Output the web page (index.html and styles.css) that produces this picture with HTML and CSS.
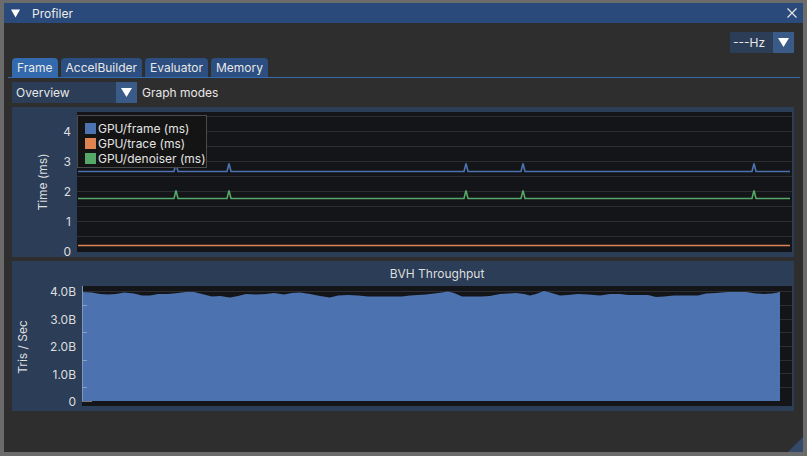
FILE: index.html
```html
<!DOCTYPE html>
<html>
<head>
<meta charset="utf-8">
<link rel="stylesheet" href="styles.css">
</head>
<body>
<div class="window">
  <div class="titlebar">
    <svg class="collapse" width="9" height="9" viewBox="0 0 9 9"><polygon points="0,0.5 9,0.5 4.5,8.5" fill="#ffffff"/></svg>
    <span class="title">Profiler</span>
    <svg class="close" width="10" height="10" viewBox="0 0 10 10"><path d="M0.5 0.5 L9.5 9.5 M9.5 0.5 L0.5 9.5" stroke="#e6e6e6" stroke-width="1.2" fill="none"/></svg>
  </div>
  <div class="content">
    <div class="toprow">
      <div class="combo hz">
        <span class="combo-text">---Hz</span>
        <span class="combo-btn"><svg width="11" height="9" viewBox="0 0 11 9"><polygon points="0,0 11,0 5.5,9" fill="#ffffff"/></svg></span>
      </div>
    </div>
    <div class="tabbar">
      <div class="tab active">Frame</div>
      <div class="tab">AccelBuilder</div>
      <div class="tab">Evaluator</div>
      <div class="tab">Memory</div>
    </div>
    <div class="moderow">
      <div class="combo overview">
        <span class="combo-text">Overview</span>
        <span class="combo-btn"><svg width="11" height="9" viewBox="0 0 11 9"><polygon points="0,0 11,0 5.5,9" fill="#ffffff"/></svg></span>
      </div>
      <span class="label">Graph modes</span>
    </div>
    <div class="plot">
      <svg class="chart" width="782" height="150" viewBox="0 0 782 150">
        <rect x="65" y="5" width="715" height="140" fill="#141518"/>
        <g stroke="#2c2e32" stroke-width="1">
          <line x1="65" x2="780" y1="9.5" y2="9.5"/>
          <line x1="65" x2="780" y1="24.5" y2="24.5"/>
          <line x1="65" x2="780" y1="39.5" y2="39.5"/>
          <line x1="65" x2="780" y1="54.5" y2="54.5"/>
          <line x1="65" x2="780" y1="69.5" y2="69.5"/>
          <line x1="65" x2="780" y1="84.5" y2="84.5"/>
          <line x1="65" x2="780" y1="99.5" y2="99.5"/>
          <line x1="65" x2="780" y1="114.5" y2="114.5"/>
          <line x1="65" x2="780" y1="129.5" y2="129.5"/>
        </g>
        <g class="tick" text-anchor="end">
          <text x="59" y="24.5">4</text>
          <text x="59" y="54.5">3</text>
          <text x="59" y="84.5">2</text>
          <text x="59" y="114.5">1</text>
          <text x="59" y="144">0</text>
        </g>
        <text class="tick" text-anchor="middle" transform="translate(30 75) rotate(-90)">Time (ms)</text>
        <path d="M66 138.5 H778" stroke="#dd8452" stroke-width="1.6" fill="none"/>
        <path d="M66 91.5 H162 L164 83.5 L166 91.5 H215 L217 83.5 L219 91.5 H452 L454 83.5 L456 91.5 H509 L511 83.5 L513 91.5 H740 L742 83.5 L744 91.5 H778" stroke="#55a868" stroke-width="1.6" fill="none"/>
        <path d="M66 64.5 H162 L164 56.5 L166 64.5 H215 L217 56.5 L219 64.5 H452 L454 56.5 L456 64.5 H509 L511 56.5 L513 64.5 H740 L742 56.5 L744 64.5 H778" stroke="#4c72b0" stroke-width="1.6" fill="none"/>
      </svg>
      <div class="legend">
        <div class="entry"><span class="swatch blue"></span>GPU/frame (ms)</div>
        <div class="entry"><span class="swatch orange"></span>GPU/trace (ms)</div>
        <div class="entry"><span class="swatch green"></span>GPU/denoiser (ms)</div>
      </div>
    </div>
    <div class="plot">
      <svg class="chart" width="782" height="150" viewBox="0 0 782 150">
        <text class="tick" x="425" y="12" text-anchor="middle">BVH Throughput</text>
        <rect x="70" y="25" width="710" height="120" fill="#141518"/>
        <g stroke="#2c2e32" stroke-width="1">
          <line x1="70" x2="780" y1="30.5" y2="30.5"/>
          <line x1="70" x2="780" y1="44.5" y2="44.5"/>
          <line x1="70" x2="780" y1="58.5" y2="58.5"/>
          <line x1="70" x2="780" y1="71.5" y2="71.5"/>
          <line x1="70" x2="780" y1="85.5" y2="85.5"/>
          <line x1="70" x2="780" y1="99.5" y2="99.5"/>
          <line x1="70" x2="780" y1="112.5" y2="112.5"/>
          <line x1="70" x2="780" y1="126.5" y2="126.5"/>
        </g>
        <polygon fill="#4c72b0" points="70,140 70,31 80,31.5 88,33 96,33.5 104,33 112,31.5 122,32.5 130,34.5 138,34.5 146,33 156,33 166,32 174,31 182,31 190,33 200,35.5 208,35 218,36.5 226,35 234,33 244,33.5 254,33 262,32 272,33.5 280,32 288,31.5 298,33 308,35 318,36.5 326,34.5 336,34 346,34.5 356,35.5 366,35.5 378,35.5 390,35.5 398,34.5 406,34 414,33.5 422,32.5 430,31.5 436,30.5 442,32 450,35.5 460,35.5 470,35.5 478,35 488,33 496,32.5 504,32 512,33 518,34.5 524,33 532,30 538,31.5 548,34.5 556,34 566,33 576,33.5 588,34.5 598,33 608,33 616,34 626,34 636,34 644,36 652,35.5 662,34.5 674,34.5 686,34.5 694,32.5 704,32 716,31 726,31 734,31 744,32.5 752,33 760,32.5 766,31.5 768,30.5 768,140"/>
        <line x1="70.5" x2="70.5" y1="25" y2="141" stroke="#8397b8" stroke-width="1"/>
        <g stroke="#8a9ec0" stroke-width="1">
          <line x1="70" x2="75" y1="44.5" y2="44.5"/>
          <line x1="70" x2="75" y1="71.5" y2="71.5"/>
          <line x1="70" x2="75" y1="99.5" y2="99.5"/>
          <line x1="70" x2="75" y1="126.5" y2="126.5"/>
        </g>
        <line x1="70" x2="80" y1="140.5" y2="140.5" stroke="#7a7a7a" stroke-width="1"/>
        <g class="tick" text-anchor="end">
          <text x="64" y="30.5">4.0B</text>
          <text x="64" y="58">3.0B</text>
          <text x="64" y="85.5">2.0B</text>
          <text x="64" y="113">1.0B</text>
          <text x="64" y="140">0</text>
        </g>
        <text class="tick" text-anchor="middle" transform="translate(10 86) rotate(-90)">Tris / Sec</text>
      </svg>
    </div>
  </div>
  <div class="grip"></div>
</div>
</body>
</html>
```

FILE: styles.css
```css
html, body {
  margin: 0;
  background: #6b6b6b;
}
body {
  width: 807px;
  height: 456px;
  overflow: hidden;
  padding: 3px 0 0 4px;
  box-sizing: border-box;
  font-family: Inter, Roboto, "Liberation Sans", sans-serif;
  font-size: 12px;
  color: #e8e8e8;
}
.window {
  width: 799px;
  height: 449px;
  background: #2e2e2e;
  position: relative;
  display: flex;
  flex-direction: column;
}
.titlebar {
  height: 20px;
  background: #294a7a;
  display: flex;
  align-items: center;
  padding: 0 7px;
  flex: none;
}
.collapse {
  display: block;
  margin-top: 1px;
}
.title {
  margin-left: 12px;
  color: #ececec;
}
.close {
  display: block;
  margin-left: auto;
  margin-right: -1px;
}
.content {
  padding: 0 9px 0 8px;
  display: flex;
  flex-direction: column;
}
.toprow {
  margin-top: 9px;
  height: 21px;
  display: flex;
  justify-content: flex-end;
}
.combo {
  display: flex;
  height: 21px;
}
.combo-text {
  background: #2b3d57;
  padding: 0 4px;
  line-height: 21px;
  box-sizing: border-box;
}
.combo-btn {
  width: 21px;
  height: 21px;
  background: #3a5b87;
  display: flex;
  align-items: center;
  justify-content: center;
}
.combo-btn svg {
  display: block;
}
.hz .combo-text {
  width: 43px;
  padding-left: 3px;
}
.overview .combo-text {
  width: 104px;
}
.tabbar {
  margin: 5px -6px 0 -4px;
  padding: 0 6px 0 4px;
  display: flex;
  gap: 3px;
  border-bottom: 1px solid #3369ad;
}
.tab {
  height: 19px;
  line-height: 19px;
  padding: 0 5px;
  background: #2c4e80;
  border-radius: 4px 4px 0 0;
}
.tab.active {
  background: #3369ad;
}
.moderow {
  margin-top: 4px;
  height: 21px;
  display: flex;
  align-items: center;
  gap: 5px;
}
.plot {
  margin-top: 4px;
  height: 150px;
  background: #2b3d57;
  position: relative;
}
.chart {
  display: block;
}
.chart text, .tick {
  font-family: Inter, Roboto, "Liberation Sans", sans-serif;
  font-size: 12px;
  fill: #dedede;
  dominant-baseline: central;
}
.legend {
  position: absolute;
  left: 65px;
  top: 8px;
  width: 130px;
  height: 53px;
  box-sizing: border-box;
  background: #141414;
  border: 1px solid #4a4a4a;
  padding: 5px 0 0 7px;
}
.entry {
  height: 15px;
  display: flex;
  align-items: center;
  white-space: nowrap;
  color: #e4e4e4;
}
.swatch {
  width: 11px;
  height: 11px;
  margin-right: 2px;
  flex: none;
}
.swatch.blue { background: #4c72b0; }
.swatch.orange { background: #dd8452; }
.swatch.green { background: #55a868; }
.grip {
  position: absolute;
  right: 0;
  bottom: 0;
  width: 15px;
  height: 15px;
  background: #35496a;
  clip-path: polygon(100% 0, 100% 100%, 0 100%);
}
```
